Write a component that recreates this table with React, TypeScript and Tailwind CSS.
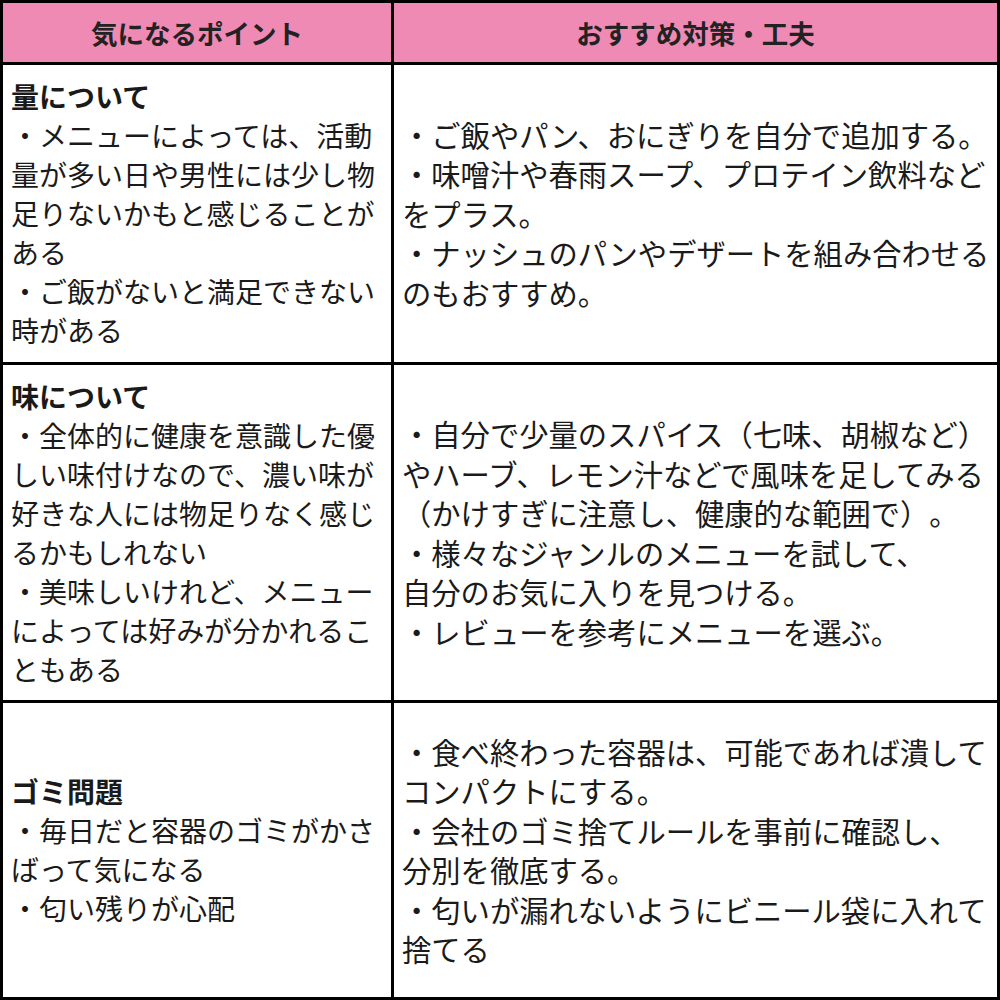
const font = { fontFamily: '"Noto Sans CJK JP", "Noto Sans", sans-serif' };

type Row = {
  title: string;
  left: string[];
  right: string[];
};

const rows: Row[] = [
  {
    title: "量について",
    left: [
      "・メニューによっては、活動",
      "量が多い日や男性には少し物",
      "足りないかもと感じることが",
      "ある",
      "・ご飯がないと満足できない",
      "時がある",
    ],
    right: [
      "・ご飯やパン、おにぎりを自分で追加する。",
      "・味噌汁や春雨スープ、プロテイン飲料など",
      "をプラス。",
      "・ナッシュのパンやデザートを組み合わせる",
      "のもおすすめ。",
    ],
  },
  {
    title: "味について",
    left: [
      "・全体的に健康を意識した優",
      "しい味付けなので、濃い味が",
      "好きな人には物足りなく感じ",
      "るかもしれない",
      "・美味しいけれど、メニュー",
      "によっては好みが分かれるこ",
      "ともある",
    ],
    right: [
      "・自分で少量のスパイス（七味、胡椒など）",
      "やハーブ、レモン汁などで風味を足してみる",
      "（かけすぎに注意し、健康的な範囲で）。",
      "・様々なジャンルのメニューを試して、",
      "自分のお気に入りを見つける。",
      "・レビューを参考にメニューを選ぶ。",
    ],
  },
  {
    title: "ゴミ問題",
    left: [
      "・毎日だと容器のゴミがかさ",
      "ばって気になる",
      "・匂い残りが心配",
    ],
    right: [
      "・食べ終わった容器は、可能であれば潰して",
      "コンパクトにする。",
      "・会社のゴミ捨てルールを事前に確認し、",
      "分別を徹底する。",
      "・匂いが漏れないようにビニール袋に入れて",
      "捨てる",
    ],
  },
];

export default function App() {
  return (
    <div
      className="w-[1000px] h-[1000px] bg-black p-[3px] grid grid-cols-[388px_603px] grid-rows-[59px_297px_335px_294px] gap-[3px] text-[#1a1a1a] [text-spacing-trim:space-all]"
      style={font}
    >
      {/* header */}
      <div className="bg-[#ee8ab4] flex items-center justify-center text-[26.5px] font-bold text-[#222]">
        気になるポイント
      </div>
      <div className="bg-[#ee8ab4] flex items-center justify-center text-[26.5px] font-bold text-[#222]">
        おすすめ対策・工夫
      </div>

      {rows.map((r) => (
        <>
          <div key={r.title + "l"} className="bg-white flex flex-col justify-center pl-[8px] text-[28px] leading-[39px] whitespace-nowrap">
            <div className="font-bold text-[28px]">{r.title}</div>
            {r.left.map((l, i) => (
              <div key={i}>{l}</div>
            ))}
          </div>
          <div key={r.title + "r"} className="bg-white flex flex-col justify-center pl-[8px] text-[29.3px] leading-[39.5px] whitespace-nowrap">
            {r.right.map((l, i) => (
              <div key={i}>{l}</div>
            ))}
          </div>
        </>
      ))}
    </div>
  );
}
